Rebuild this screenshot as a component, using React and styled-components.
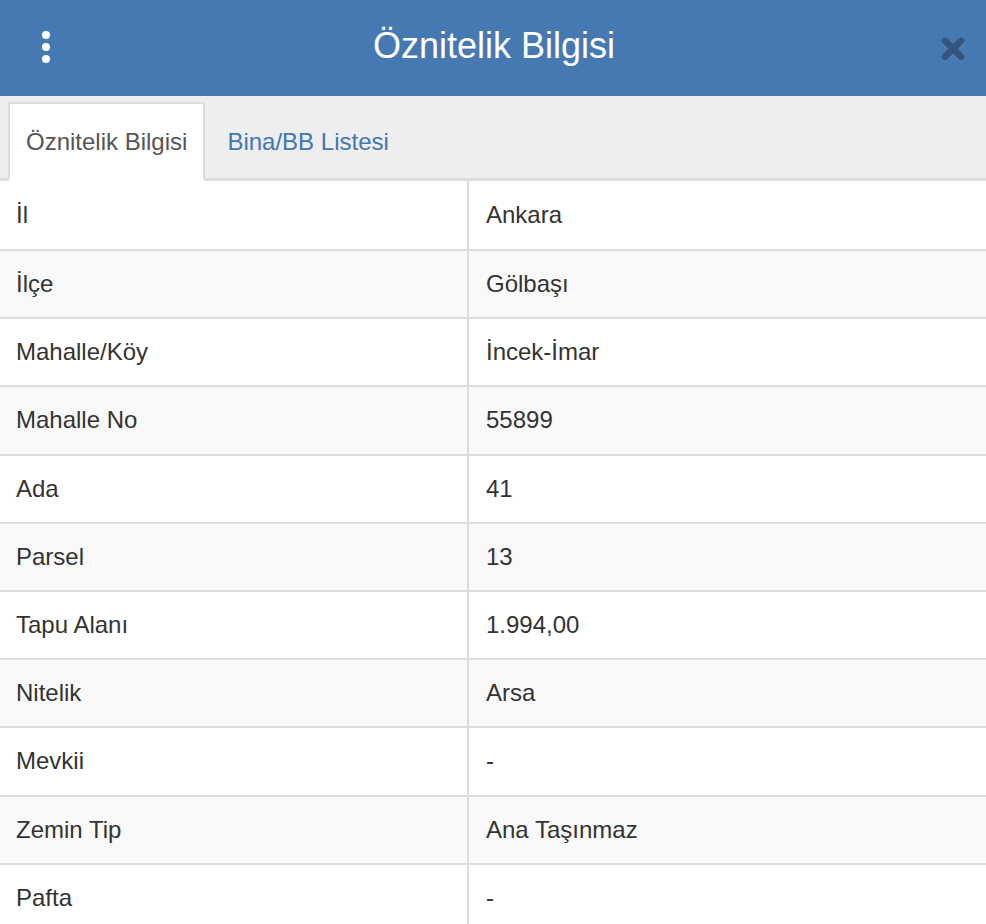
import React from "react";
import styled, { createGlobalStyle } from "styled-components";

const Global = createGlobalStyle`
  html, body { margin: 0; padding: 0; background: #fff; }
  body { font-family: "Liberation Sans", Arial, Helvetica, sans-serif; color: #333; }
`;

const Panel = styled.div`
  width: 986px;
  display: flex;
  flex-direction: column;
`;

const Header = styled.div`
  height: 96px;
  background: #4679b2;
  display: grid;
  grid-template-columns: 90px 1fr 90px;
  align-items: center;
`;

const MenuButton = styled.div`
  display: flex;
  flex-direction: column;
  align-items: center;
  gap: 4px;
  padding-left: 2px;
  margin-top: -2px;
`;

const Dot = styled.span`
  width: 8px;
  height: 8px;
  border-radius: 50%;
  background: #fff;
`;

const Title = styled.h1`
  margin: 0;
  text-align: center;
  color: #fff;
  font-weight: normal;
  font-size: 36px;
  line-height: 40px;
  padding-left: 2px;
  margin-top: -4px;
`;

const Close = styled.div`
  display: flex;
  justify-content: flex-end;
  padding-right: 20px;
  opacity: 0.28;
  margin-top: 1px;
`;

const TabBar = styled.div`
  background: #eeeeee;
  height: 85px;
  box-sizing: border-box;
  padding: 6px 0 0 8px;
  display: flex;
  align-items: flex-end;
  border-bottom: 3px solid #dddddd;
`;

const Tab = styled.div`
  height: 79px;
  box-sizing: border-box;
  display: flex;
  align-items: center;
  padding: 2px 16px 0 16px;
  font-size: 24px;
  margin-bottom: -3px;
  color: ${(p) => (p.$active ? "#555" : "#3e78b4")};
  background: ${(p) => (p.$active ? "#fff" : "transparent")};
  border: 2px solid ${(p) => (p.$active ? "#dddddd" : "transparent")};
  border-bottom: 3px solid ${(p) => (p.$active ? "#fff" : "transparent")};
  margin-right: 4px;
`;

const Table = styled.div`
  display: flex;
  flex-direction: column;
`;

const Row = styled.div`
  display: grid;
  grid-template-columns: 467px 2px 1fr;
  background: ${(p) => (p.$striped ? "#f9f9f9" : "#fff")};
  border-top: ${(p) => (p.$first ? "0" : "2px solid #dddddd")};
  font-size: 24px;
`;

const Cell = styled.div`
  padding: ${(p) => (p.$first ? "16.9px" : "16px")} 16px
    ${(p) => (p.$first ? "16.9px" : "16px")} ${(p) => (p.$value ? "17px" : "16px")};
  line-height: 34.2px;
  color: #333;
`;

const Divider = styled.div`
  background: #dddddd;
`;

const rows = [
  ["İl", "Ankara"],
  ["İlçe", "Gölbaşı"],
  ["Mahalle/Köy", "İncek-İmar"],
  ["Mahalle No", "55899"],
  ["Ada", "41"],
  ["Parsel", "13"],
  ["Tapu Alanı", "1.994,00"],
  ["Nitelik", "Arsa"],
  ["Mevkii", "-"],
  ["Zemin Tip", "Ana Taşınmaz"],
  ["Pafta", "-"],
];

export default function App() {
  return (
    <Panel>
      <Global />
      <Header>
        <MenuButton>
          <Dot />
          <Dot />
          <Dot />
        </MenuButton>
        <Title>Öznitelik Bilgisi</Title>
        <Close>
          <svg width="26" height="26" viewBox="0 0 26 26">
            <g stroke="#fff" strokeWidth="7" strokeLinecap="round" transform="translate(0,1)" opacity="0.6">
              <line x1="5" y1="5" x2="21" y2="21" />
              <line x1="21" y1="5" x2="5" y2="21" />
            </g>
            <g stroke="#000" strokeWidth="7" strokeLinecap="round">
              <line x1="5" y1="5" x2="21" y2="21" />
              <line x1="21" y1="5" x2="5" y2="21" />
            </g>
          </svg>
        </Close>
      </Header>
      <TabBar>
        <Tab $active>Öznitelik Bilgisi</Tab>
        <Tab>Bina/BB Listesi</Tab>
      </TabBar>
      <Table>
        {rows.map(([k, v], i) => (
          <Row key={k} $striped={i % 2 === 1} $first={i === 0}>
            <Cell $first={i === 0}>{k}</Cell>
            <Divider />
            <Cell $first={i === 0} $value>{v}</Cell>
          </Row>
        ))}
      </Table>
    </Panel>
  );
}
